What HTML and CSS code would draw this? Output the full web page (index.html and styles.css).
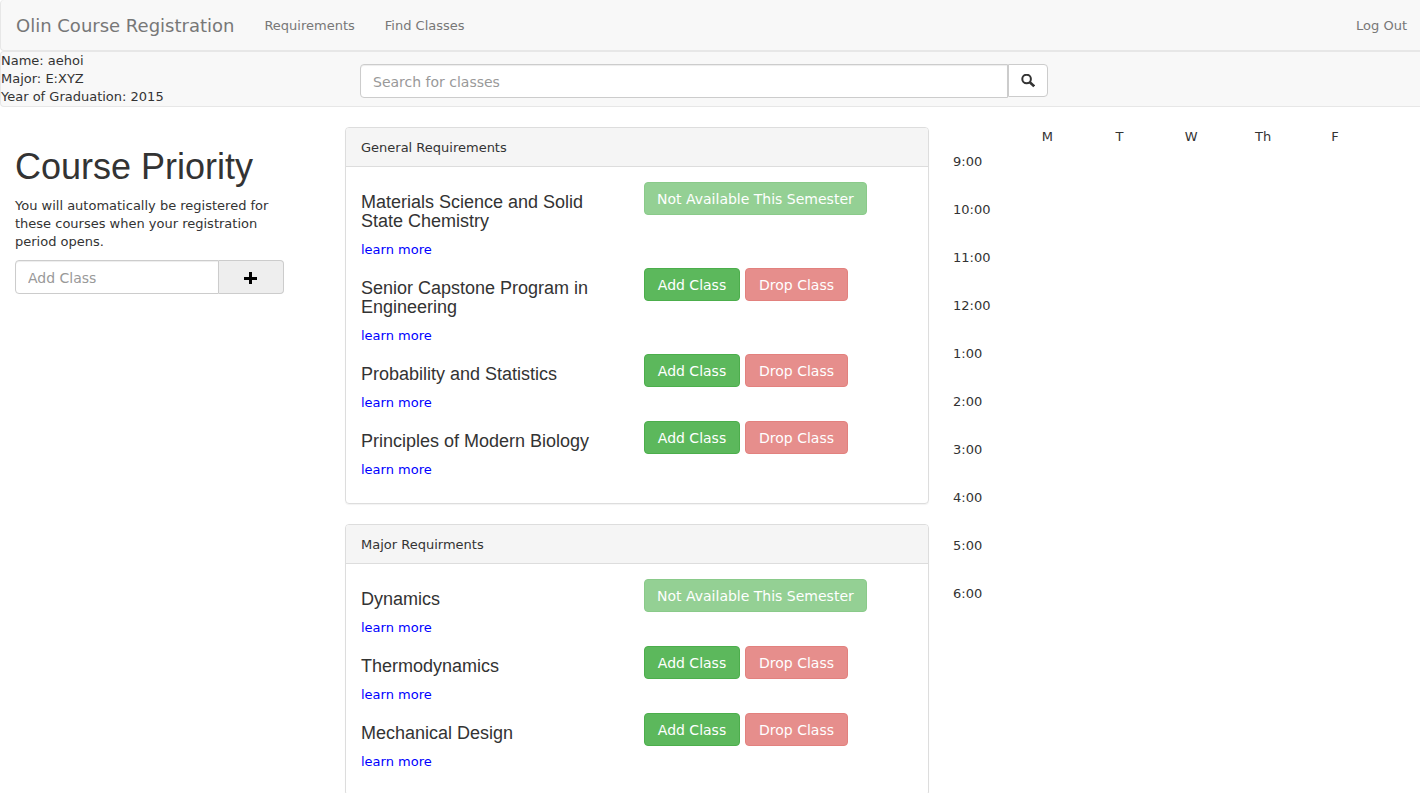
FILE: index.html
```html
<!DOCTYPE html>
<html lang="en">
<head>
<meta charset="utf-8">
<title>Olin Course Registration</title>
<link rel="stylesheet" href="styles.css">
</head>
<body>
<nav class="navbar">
  <a class="brand" href="#">Olin Course Registration</a>
  <a class="nav-link" href="#">Requirements</a>
  <a class="nav-link" href="#">Find Classes</a>
  <a class="nav-link logout" href="#">Log Out</a>
</nav>
<header class="profile">
  <div class="student">
    <div>Name: aehoi</div>
    <div>Major: E:XYZ</div>
    <div>Year of Graduation: 2015</div>
  </div>
  <form class="search">
    <input class="field" type="text" placeholder="Search for classes" aria-label="Search for classes">
    <button class="search-btn" type="button" aria-label="Search">
      <svg width="14" height="14" viewBox="0 0 14 14" fill="none" stroke="#333" stroke-width="2"><circle cx="5.600" cy="5" r="4.300"/><path d="M8.800 8.200l4.400 4.200" stroke-width="2.600"/></svg>
    </button>
  </form>
</header>
<main class="layout">
  <section class="priority">
    <h1>Course Priority</h1>
    <p>You will automatically be registered for these courses when your registration period opens.</p>
    <form class="add-form">
      <input class="field" type="text" placeholder="Add Class" aria-label="Add Class">
      <button class="plus-btn" type="button" aria-label="Add">
        <svg width="14" height="16" viewBox="0 0 14 16"><path d="M5 3h3v5h5v3H8v4H5v-4H0V8h5z" fill="#000"/></svg>
      </button>
    </form>
  </section>
  <div class="requirements">
    <section class="panel">
      <div class="panel-heading">General Requirements</div>
      <div class="panel-body">
        <div class="course">
          <div class="info"><h4>Materials Science and Solid State Chemistry</h4><a href="#">learn more</a></div>
          <div class="actions"><button class="btn add" disabled>Not Available This Semester</button></div>
        </div>
        <div class="course">
          <div class="info"><h4>Senior Capstone Program in Engineering</h4><a href="#">learn more</a></div>
          <div class="actions"><button class="btn add">Add Class</button><button class="btn drop" disabled>Drop Class</button></div>
        </div>
        <div class="course">
          <div class="info"><h4>Probability and Statistics</h4><a href="#">learn more</a></div>
          <div class="actions"><button class="btn add">Add Class</button><button class="btn drop" disabled>Drop Class</button></div>
        </div>
        <div class="course">
          <div class="info"><h4>Principles of Modern Biology</h4><a href="#">learn more</a></div>
          <div class="actions"><button class="btn add">Add Class</button><button class="btn drop" disabled>Drop Class</button></div>
        </div>
      </div>
    </section>
    <section class="panel">
      <div class="panel-heading">Major Requirments</div>
      <div class="panel-body">
        <div class="course">
          <div class="info"><h4>Dynamics</h4><a href="#">learn more</a></div>
          <div class="actions"><button class="btn add" disabled>Not Available This Semester</button></div>
        </div>
        <div class="course">
          <div class="info"><h4>Thermodynamics</h4><a href="#">learn more</a></div>
          <div class="actions"><button class="btn add">Add Class</button><button class="btn drop" disabled>Drop Class</button></div>
        </div>
        <div class="course">
          <div class="info"><h4>Mechanical Design</h4><a href="#">learn more</a></div>
          <div class="actions"><button class="btn add">Add Class</button><button class="btn drop" disabled>Drop Class</button></div>
        </div>
      </div>
    </section>
  </div>
  <section class="calendar">
    <table>
      <thead><tr><td class="hour"></td><th>M</th><th>T</th><th>W</th><th>Th</th><th>F</th></tr></thead>
      <tbody>
        <tr><th>9:00</th><td></td><td></td><td></td><td></td><td></td></tr>
        <tr><th>10:00</th><td></td><td></td><td></td><td></td><td></td></tr>
        <tr><th>11:00</th><td></td><td></td><td></td><td></td><td></td></tr>
        <tr><th>12:00</th><td></td><td></td><td></td><td></td><td></td></tr>
        <tr><th>1:00</th><td></td><td></td><td></td><td></td><td></td></tr>
        <tr><th>2:00</th><td></td><td></td><td></td><td></td><td></td></tr>
        <tr><th>3:00</th><td></td><td></td><td></td><td></td><td></td></tr>
        <tr><th>4:00</th><td></td><td></td><td></td><td></td><td></td></tr>
        <tr><th>5:00</th><td></td><td></td><td></td><td></td><td></td></tr>
        <tr><th>6:00</th><td></td><td></td><td></td><td></td><td></td></tr>
      </tbody>
    </table>
  </section>
</main>
</body>
</html>
```
FILE: styles.css
```css
* { box-sizing: border-box; }
body {
  margin: 0;
  font: 13px/18px Verdana, "DejaVu Sans", sans-serif;
  color: #333;
  background: #fff;
}
button, input { font-family: inherit; }

.navbar {
  display: flex;
  align-items: center;
  height: 51px;
  padding: 2px 13px 0 15px;
  background: #f8f8f8;
  border: solid #e7e7e7;
  border-width: 0 0 1px 1px;
  border-radius: 4px 0 0 4px;
}
.navbar a { color: #777; text-decoration: none; }
.navbar .brand { font-size: 18px; line-height: 20px; }
.nav-link { margin-left: 30px; }
.navbar .logout { margin-left: auto; }

.profile {
  display: grid;
  grid-template-columns: 359fr 688fr 372fr;
  background: #f8f8f8;
  border: solid #e7e7e7;
  border-width: 1px 0 1px 1px;
  border-radius: 4px 0 0 4px;
}
.search { display: flex; align-items: flex-start; padding-top: 12px; }
.field {
  flex: 1;
  min-width: 0;
  height: 34px;
  padding: 7px 12px 5px;
  font-size: 14px;
  color: #555;
  background: #fff;
  border: 1px solid #ccc;
  border-radius: 4px 0 0 4px;
  box-shadow: inset 0 1px 1px rgba(0, 0, 0, .075);
}
.field::placeholder { color: #999; opacity: 1; }
.search-btn {
  display: flex;
  align-items: center;
  justify-content: center;
  width: 40px;
  height: 33px;
  padding: 0;
  background: #fff;
  border: 1px solid #ccc;
  border-radius: 0 4px 4px 0;
}

.layout {
  display: grid;
  grid-template-columns: 330fr 614fr 476fr;
  padding-top: 20px;
}
.priority { padding: 0 46px 0 15px; }
h1, h4 { font-family: Arial, "Liberation Sans", sans-serif; font-weight: 500; }
h1 { margin: 20px 0 10px; font-size: 36px; line-height: 40px; }
.priority p { margin: 0 0 9px; }
.add-form { display: flex; }
.plus-btn {
  display: flex;
  align-items: center;
  justify-content: center;
  width: 65px;
  height: 34px;
  padding: 0;
  background: #eee;
  border: 1px solid #ccc;
  border-left: 0;
  border-radius: 0 4px 4px 0;
}

.requirements { padding: 0 15px; }
.panel {
  margin-bottom: 20px;
  border: 1px solid #ddd;
  border-radius: 4px;
  box-shadow: 0 1px 1px rgba(0, 0, 0, .05);
}
.panel-heading {
  padding: 11px 15px 9px;
  background: #f5f5f5;
  border-bottom: 1px solid #ddd;
  border-radius: 3px 3px 0 0;
}
.panel-body { padding: 15px; }
.course { display: grid; grid-template-columns: 283fr 269fr; }
.info { padding: 11px 30px 9px 0; }
h4 { margin: 0 0 10px; font-size: 18px; line-height: 19px; }
.info a { display: block; color: #00f; text-decoration: none; }
.actions { display: flex; align-items: flex-start; gap: 5px; }
.btn {
  height: 33px;
  padding: 0 12px;
  font-size: 14px;
  white-space: nowrap;
  color: #fff;
  border: 1px solid;
  border-radius: 4px;
}
.btn:disabled { opacity: .65; }
.add { min-width: 96px; background: #5cb85c; border-color: #4cae4c; }
.drop { min-width: 103px; background: #d9534f; border-color: #d43f3a; }

.calendar { padding: 1px 49px 0 9px; }
table { width: 100%; border-collapse: collapse; table-layout: fixed; }
th, td { padding: 0; font-weight: 400; vertical-align: top; }
.hour { width: 14%; }
thead tr { height: 25px; }
tbody tr { height: 48px; }
tbody th { text-align: left; }
```
